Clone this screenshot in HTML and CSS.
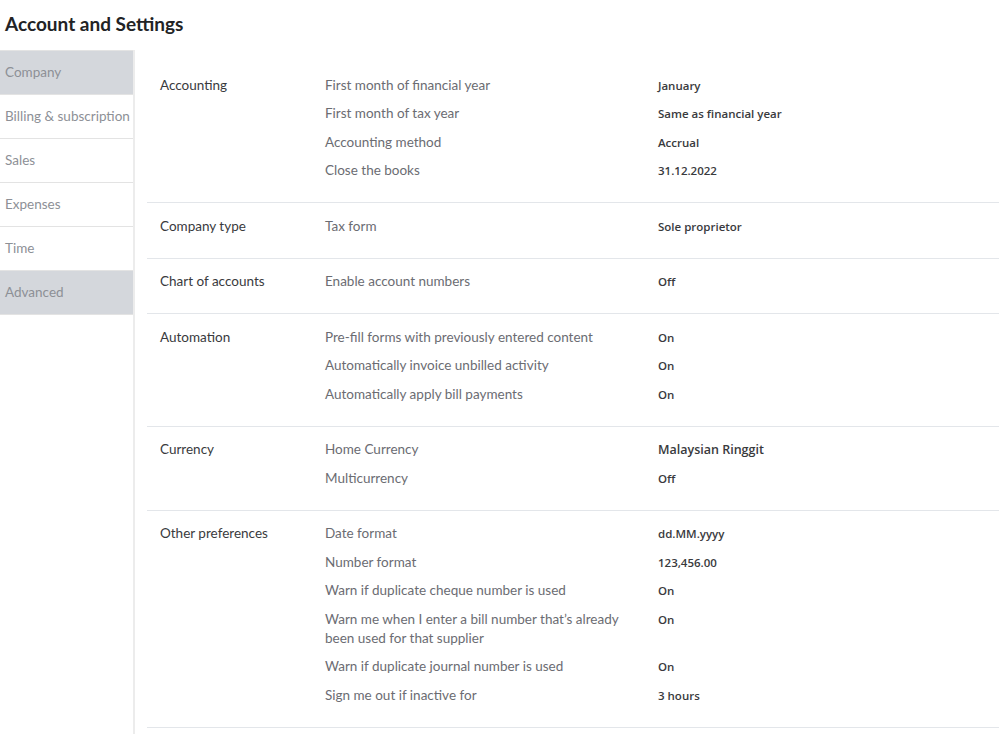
FILE: index.html
```html
<!DOCTYPE html>
<html>
  <head>
    <meta charset="utf-8">
    <title>Account and Settings</title>
    <link rel="stylesheet" href="styles.css">
  </head>
  <body>
    <h1 class="title">Account and Settings</h1>

    <div class="layout">
      <ul class="sidenav">
        <li class="active">Company</li>
        <li>Billing &amp; subscription</li>
        <li>Sales</li>
        <li>Expenses</li>
        <li>Time</li>
        <li class="active">Advanced</li>
      </ul>

      <div class="content">
        <div class="section">
          <div class="label">Accounting</div>
          <div class="rows">
            <div class="row"><span class="field">First month of financial year</span><span class="value">January</span></div>
            <div class="row"><span class="field">First month of tax year</span><span class="value">Same as financial year</span></div>
            <div class="row"><span class="field">Accounting method</span><span class="value">Accrual</span></div>
            <div class="row"><span class="field">Close the books</span><span class="value">31.12.2022</span></div>
          </div>
        </div>

        <div class="section">
          <div class="label">Company type</div>
          <div class="rows">
            <div class="row"><span class="field">Tax form</span><span class="value">Sole proprietor</span></div>
          </div>
        </div>

        <div class="section">
          <div class="label">Chart of accounts</div>
          <div class="rows">
            <div class="row"><span class="field">Enable account numbers</span><span class="value">Off</span></div>
          </div>
        </div>

        <div class="section">
          <div class="label">Automation</div>
          <div class="rows">
            <div class="row"><span class="field">Pre-fill forms with previously entered content</span><span class="value">On</span></div>
            <div class="row"><span class="field">Automatically invoice unbilled activity</span><span class="value">On</span></div>
            <div class="row"><span class="field">Automatically apply bill payments</span><span class="value">On</span></div>
          </div>
        </div>

        <div class="section">
          <div class="label">Currency</div>
          <div class="rows">
            <div class="row"><span class="field">Home Currency</span><span class="value big">Malaysian Ringgit</span></div>
            <div class="row"><span class="field">Multicurrency</span><span class="value">Off</span></div>
          </div>
        </div>

        <div class="section">
          <div class="label">Other preferences</div>
          <div class="rows">
            <div class="row"><span class="field">Date format</span><span class="value">dd.MM.yyyy</span></div>
            <div class="row"><span class="field">Number format</span><span class="value">123,456.00</span></div>
            <div class="row"><span class="field">Warn if duplicate cheque number is used</span><span class="value">On</span></div>
            <div class="row"><span class="field">Warn me when I enter a bill number that’s already been used for that supplier</span><span class="value">On</span></div>
            <div class="row"><span class="field">Warn if duplicate journal number is used</span><span class="value">On</span></div>
            <div class="row"><span class="field">Sign me out if inactive for</span><span class="value">3 hours</span></div>
          </div>
        </div>
      </div>
    </div>
  </body>
</html>
```

FILE: styles.css
```css
body, h1, ul, li {margin:0;padding:0}

body {
  background-color: #fff;
  color: #393a3d;
  font-family: 'Lato', 'Open Sans', sans-serif;
  font-size: 13.5px;
}

.title {
  height: 50px;
  line-height: 48px;
  padding-left: 5px;
  font-size: 19px;
  font-weight: bold;
  color: #222325;
}

.layout {
  display: flex;
  min-height: 684px;
}

/* left menu */
.sidenav {
  list-style: none;
  width: 133px;
  flex: none;
  border-right: 2px solid #ececec;
}

.sidenav li {
  height: 43px;
  line-height: 43px;
  padding-left: 5px;
  color: #8d9096;
  border-bottom: 1px solid #e3e3e3;
  white-space: nowrap;
}

.sidenav li:first-child {
  border-top: 1px solid #e3e3e3;
}

.sidenav li.active {
  background-color: #d4d7dc;
}

/* settings list */
.content {
  flex: 1;
  margin-left: 12px;
  padding-top: 12px;
}

.section {
  display: flex;
  padding: 9px 0 17px 13px;
  border-bottom: 1px solid #e3e6ea;
}

.label {
  width: 165px;
  flex: none;
  padding-top: 4.5px;
  line-height: 19px;
}

.rows {
  flex: 1;
}

.row {
  display: flex;
  padding: 4.5px 0 5px;
  line-height: 19px;
}

.field {
  width: 333px;
  flex: none;
  padding-right: 30px;
  box-sizing: border-box;
  color: #6b6c72;
}

.value {
  font-family: 'Open Sans', sans-serif;
  font-weight: 600;
  font-size: 11.5px;
  color: #393a3d;
}

.value.big {
  font-size: 12.5px;
}
```
